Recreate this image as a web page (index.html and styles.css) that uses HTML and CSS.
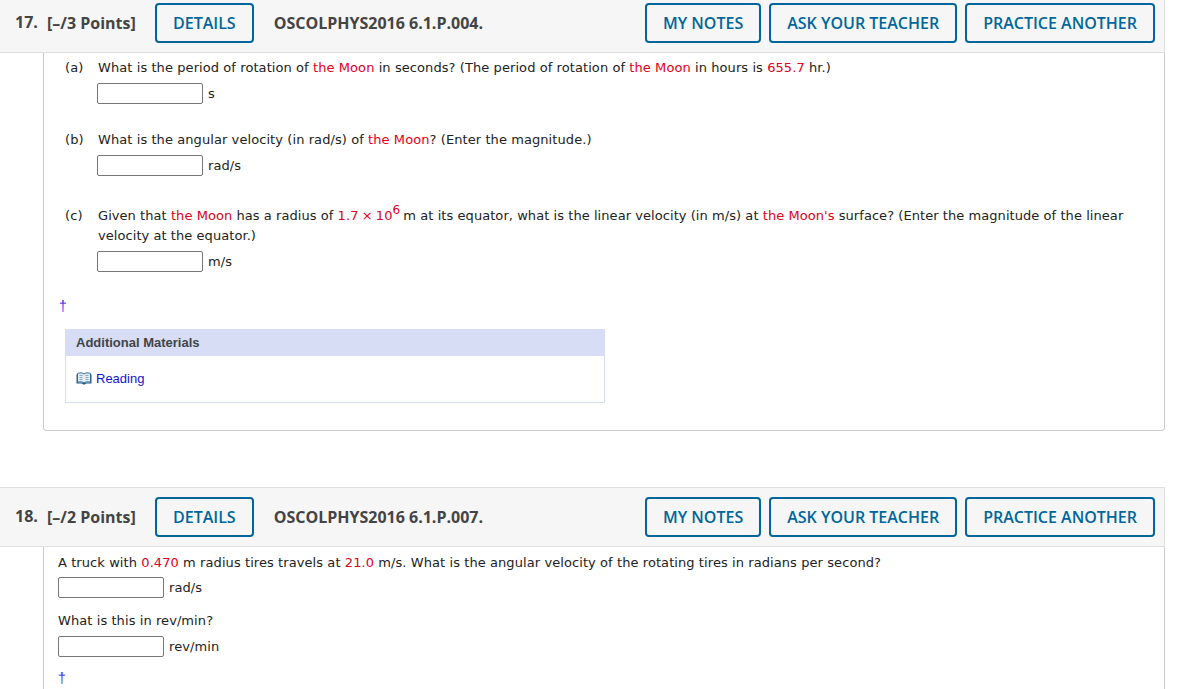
FILE: index.html
```html
<!DOCTYPE html>
<html>

<head>
    <meta charset="UTF-8">
    <title>Assignment</title>
    <link rel="stylesheet" href="styles.css">
</head>

<body>
    <div class="question first">
        <div class="q-head">
            <span class="q-num">17.</span>
            <span class="q-points">[&ndash;/3 Points]</span>
            <button class="q-btn details">DETAILS</button>
            <span class="q-code">OSCOLPHYS2016 6.1.P.004.</span>
            <button class="q-btn notes">MY NOTES</button>
            <button class="q-btn">ASK YOUR TEACHER</button>
            <button class="q-btn">PRACTICE ANOTHER</button>
        </div>
        <div class="q-body parts">
            <div class="part part-a">
                <span class="part-label">(a)</span>
                <div class="part-text">
                    <p>What is the period of rotation of <span class="red">the Moon</span> in seconds? (The period of rotation of <span class="red">the Moon</span> in hours is <span class="red">655.7</span> hr.)</p>
                    <div class="answer"><input type="text"><span>s</span></div>
                </div>
            </div>
            <div class="part part-b">
                <span class="part-label">(b)</span>
                <div class="part-text">
                    <p>What is the angular velocity (in rad/s) of <span class="red">the Moon</span>? (Enter the magnitude.)</p>
                    <div class="answer"><input type="text"><span>rad/s</span></div>
                </div>
            </div>
            <div class="part part-c">
                <span class="part-label">(c)</span>
                <div class="part-text">
                    <p class="tight">Given that <span class="red">the Moon</span> has a radius of <span class="red sci">1.7 &times; 10<sup>6</sup></span> m at its equator, what is the linear velocity (in m/s) at <span class="red">the Moon's</span> surface? (Enter the magnitude of the linear velocity at the equator.)</p>
                    <div class="answer"><input type="text"><span>m/s</span></div>
                </div>
            </div>
            <div class="dagger dagger-a">&dagger;</div>
            <div class="materials">
                <div class="materials-head">Additional Materials</div>
                <div class="materials-body">
                    <svg class="book" width="16" height="14" viewBox="0 0 16 14">
                        <path d="M0.5 2.5 L0.5 11.5 L6 11.5 L7.2 12.5 L8.8 12.5 L10 11.5 L15.5 11.5 L15.5 2.5 L14 2.5 L14 10.5 L2 10.5 L2 2.5 Z" fill="#1d5a86" />
                        <path d="M1.5 1.5 C4 0.5 6.500 0.7 8 2 C9.500 0.7 12 0.5 14.500 1.500 L14.500 10.200 C12 9.500 9.500 9.700 8 11 C6.500 9.700 4 9.500 1.500 10.200 Z" fill="#e4edf3" stroke="#2b6a94" stroke-width="1" />
                        <path d="M3.500 3.500 H6.500 M3.500 5.500 H6.500 M3.500 7.500 H6.500 M9.500 3.500 H12.500 M9.500 5.500 H12.500 M9.500 7.500 H12.500" stroke="#8aa6ba" stroke-width="1" />
                    </svg>
                    <a class="reading" href="#">Reading</a>
                </div>
            </div>
        </div>
    </div>

    <div class="question second">
        <div class="q-head">
            <span class="q-num">18.</span>
            <span class="q-points">[&ndash;/2 Points]</span>
            <button class="q-btn details">DETAILS</button>
            <span class="q-code">OSCOLPHYS2016 6.1.P.007.</span>
            <button class="q-btn notes">MY NOTES</button>
            <button class="q-btn">ASK YOUR TEACHER</button>
            <button class="q-btn">PRACTICE ANOTHER</button>
        </div>
        <div class="q-body single">
            <p>A truck with <span class="red">0.470</span> m radius tires travels at <span class="red">21.0</span> m/s. What is the angular velocity of the rotating tires in radians per second?</p>
            <div class="answer answer-first"><input type="text"><span>rad/s</span></div>
            <p class="follow">What is this in rev/min?</p>
            <div class="answer"><input type="text"><span>rev/min</span></div>
            <div class="dagger dagger-b">&dagger;</div>
        </div>
    </div>
</body>

</html>
```

FILE: styles.css
```css
html,
body {
    height: 689px;
    overflow: hidden;
}

body {
    margin: 0;
    background: #fff;
    font-family: "DejaVu Sans", Verdana, sans-serif;
    font-size: 13px;
    line-height: 20px;
    letter-spacing: 0.08px;
    color: #222;
}

p {
    margin: 0;
}

.first {
    margin-top: -7px;
}

.second {
    margin-top: 56px;
}

.q-head {
    width: 1165px;
    height: 60px;
    box-sizing: border-box;
    display: flex;
    align-items: center;
    padding: 0 9px 0 15px;
    background: #f6f6f6;
    border: 1px solid #e0e0e0;
    border-left: 0;
    font-family: "Open Sans", sans-serif;
    font-size: 16px;
    font-weight: 700;
    letter-spacing: 0;
    color: #444;
}

.q-num {
    width: 32px;
    position: relative;
    top: -1px;
}

.q-points {
    width: 108px;
}

.q-code {
    margin-left: 20px;
    flex: 1;
}

.q-btn {
    height: 40px;
    padding: 0 16px;
    margin-left: 8px;
    box-sizing: border-box;
    background: #f6f6f6;
    border: 2px solid #00669c;
    border-radius: 4px;
    font-family: "Open Sans", sans-serif;
    font-size: 16px;
    font-weight: 600;
    color: #00669c;
}

.q-btn.details {
    margin-left: 0;
}

.q-body {
    width: 1122px;
    margin-left: 43px;
    box-sizing: border-box;
    background: #fff;
    border-left: 1px solid #ccc;
    border-right: 1px solid #ccc;
}

.parts {
    height: 378px;
    padding: 5px 0 0 21px;
    border-bottom: 1px solid #ccc;
    border-radius: 0 0 4px 4px;
}

.part {
    display: flex;
}

.part-label {
    width: 33px;
    flex: none;
}

.part-text {
    flex: 1;
    padding-right: 28px;
}

.part-b {
    margin-top: 26px;
}

.part-c {
    margin-top: 30px;
}

.tight {
    letter-spacing: 0.06px;
}

.red {
    color: #e0001b;
}

.sci {
    word-spacing: -1px;
}

sup {
    font-size: 12px;
    line-height: 0;
    vertical-align: 6px;
    margin-right: -1px;
}

.answer {
    display: flex;
    align-items: center;
    height: 21px;
    margin-top: 5px;
    margin-left: -1px;
}

.answer input {
    width: 106px;
    height: 21px;
    box-sizing: border-box;
    padding: 0;
    margin: 0 5px 0 0;
    background: #fff;
    border: 1px solid #777;
    border-radius: 2px;
}

.dagger {
    color: #3a2cf0;
    font-family: "Liberation Sans", sans-serif;
    font-size: 14px;
}

.dagger-a {
    margin: 24px 0 0 -6px;
}

.materials {
    width: 540px;
    height: 74px;
    margin-top: 13px;
    box-sizing: border-box;
    border: 1px solid #d6ddf5;
    border-top: 0;
    font-family: "Liberation Sans", sans-serif;
    font-size: 13px;
    letter-spacing: 0;
}

.materials-head {
    height: 27px;
    line-height: 27px;
    margin: 0 -1px;
    padding-left: 11px;
    background: #d6ddf5;
    font-weight: 700;
    color: #444;
}

.materials-body {
    display: flex;
    align-items: center;
    height: 46px;
    padding-left: 10px;
}

.book {
    margin-right: 4px;
}

.reading {
    color: #1414c8;
    text-decoration: none;
}

.single {
    height: 200px;
    padding: 6px 0 0 14px;
}

.single .answer {
    margin-left: 0;
}

.single .answer-first {
    margin-top: 4px;
}

.follow {
    margin-top: 13px;
}

.dagger-b {
    margin-top: 11px;
}
```
